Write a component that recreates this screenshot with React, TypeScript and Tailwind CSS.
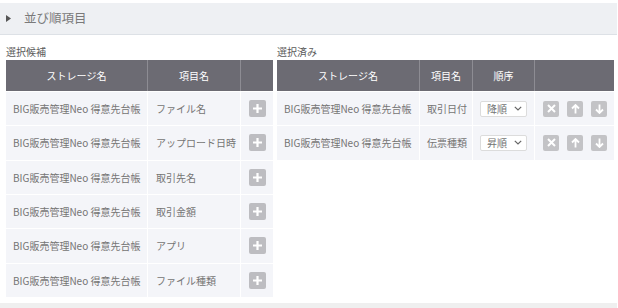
const font = { fontFamily: '"Noto Sans CJK JP", "Noto Sans", sans-serif' };

const candidates = ['ファイル名', 'アップロード日時', '取引先名', '取引金額', 'アプリ', 'ファイル種類'];
const selected = [
  { item: '取引日付', order: '降順' },
  { item: '伝票種類', order: '昇順' },
];
const storage = 'BIG販売管理Neo 得意先台帳';

function SqBtn({ children }: { children: React.ReactNode }) {
  return (
    <span className="flex h-[16px] w-[16px] items-center justify-center rounded-[2px] bg-[#c3c3c6]">
      {children}
    </span>
  );
}

function Plus() {
  return (
    <span className="flex h-[17px] w-[17px] items-center justify-center rounded-[2px] bg-[#bdbdc1]">
      <svg width="11" height="11" viewBox="0 0 11 11">
        <path d="M5.5 1v9M1 5.5h9" stroke="#fff" strokeWidth="2.2" />
      </svg>
    </span>
  );
}

export default function App() {
  return (
    <div className="w-[618px] h-[308px] bg-white text-[#747474] overflow-hidden" style={font}>
      <div className="h-[3px]" />
      <div className="flex h-[32px] w-[617px] items-center bg-[#eef0f3] border-b border-[#dde1e6]">
        <svg width="5" height="7" viewBox="0 0 5 7" className="ml-[6px]">
          <path d="M0 0L5 3.5L0 7Z" fill="#555" />
        </svg>
        <span className="ml-[13px] text-[12.5px] text-[#7a7a7a]">並び順項目</span>
      </div>

      <div className="flex gap-[4px] px-[6px] pt-[9px]">
        <div className="w-[267px] shrink-0">
          <div className="h-[16px] text-[10px] leading-[16px] text-[#5a5a5a]">選択候補</div>
          <div className="flex h-[31px] bg-[#6c6b73] text-[10px] text-white">
            <div className="flex w-[142px] items-center justify-center border-r border-[#8d8c93]">ストレージ名</div>
            <div className="flex w-[93px] items-center justify-center border-r border-[#8d8c93]">項目名</div>
            <div className="flex-1" />
          </div>
          {candidates.map((c) => (
            <div key={c} className="flex h-[34.33px] border-t border-white bg-[#f4f5f9] text-[10px]">
              <div className="flex w-[142px] items-center border-r border-white pl-[7px]">{storage}</div>
              <div className="flex w-[93px] items-center border-r border-white pl-[8px]">{c}</div>
              <div className="flex flex-1 items-center justify-center">
                <Plus />
              </div>
            </div>
          ))}
        </div>

        <div className="w-[337px] shrink-0">
          <div className="h-[16px] text-[10px] leading-[16px] text-[#5a5a5a]">選択済み</div>
          <div className="flex h-[31px] bg-[#6c6b73] text-[10px] text-white">
            <div className="flex w-[143px] items-center justify-center border-r border-[#8d8c93]">ストレージ名</div>
            <div className="flex w-[53px] items-center justify-center border-r border-[#8d8c93]">項目名</div>
            <div className="flex w-[62px] items-center justify-center border-r border-[#8d8c93]">順序</div>
            <div className="flex-1" />
          </div>
          {selected.map((s) => (
            <div key={s.item} className="flex h-[34.33px] border-t border-white bg-[#f4f5f9] text-[10px]">
              <div className="flex w-[143px] items-center border-r border-white pl-[7px]">{storage}</div>
              <div className="flex w-[53px] items-center border-r border-white pl-[7px]">{s.item}</div>
              <div className="flex w-[62px] items-center border-r border-white pl-[7px]">
                <div className="flex h-[16px] w-[47px] items-center justify-between rounded-[2px] border border-[#dcdcdc] bg-white pl-[6px] pr-[4px]">
                  <span>{s.order}</span>
                  <svg width="8" height="5" viewBox="0 0 8 5">
                    <path d="M0.8 0.8L4 4L7.2 0.8" stroke="#666" strokeWidth="1.2" fill="none" />
                  </svg>
                </div>
              </div>
              <div className="flex flex-1 items-center gap-[8px] pl-[8px]">
                <SqBtn>
                  <svg width="9" height="9" viewBox="0 0 9 9">
                    <path d="M1 1L8 8M8 1L1 8" stroke="#fff" strokeWidth="2" />
                  </svg>
                </SqBtn>
                <SqBtn>
                  <svg width="9" height="10" viewBox="0 0 9 10">
                    <path d="M4.5 9.5V2M1 4.5L4.5 1L8 4.5" stroke="#fff" strokeWidth="1.8" fill="none" />
                  </svg>
                </SqBtn>
                <SqBtn>
                  <svg width="9" height="10" viewBox="0 0 9 10">
                    <path d="M4.5 0.5V8M1 5.5L4.5 9L8 5.5" stroke="#fff" strokeWidth="1.8" fill="none" />
                  </svg>
                </SqBtn>
              </div>
            </div>
          ))}
        </div>
      </div>

      <div className="mt-[6px] h-[6px] w-[617px] bg-[#efefef]" />
    </div>
  );
}
